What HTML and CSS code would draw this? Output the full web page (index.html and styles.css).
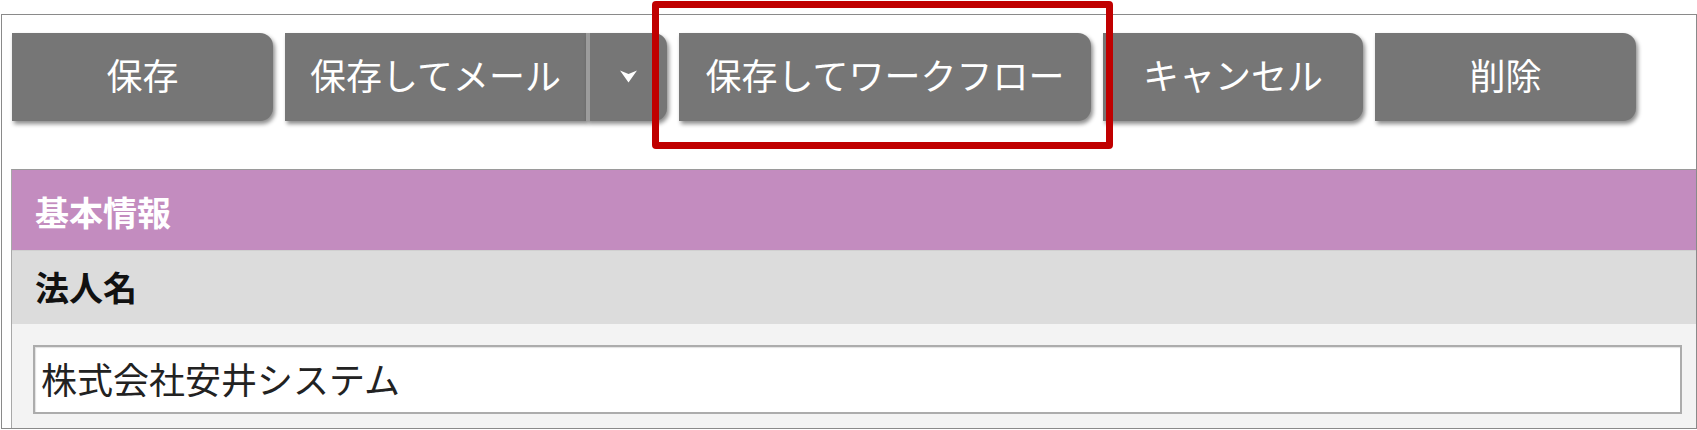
FILE: index.html
```html
<!DOCTYPE html>
<html>
    <head>
        <meta charset="utf-8">
        <title>法人情報の編集</title>
        <link rel="stylesheet" href="styles.css">
    </head>
    <body>
        <div class="frame">
            <div class="toolbar">
                <div class="btn">保存</div>
                <div class="btn_group">
                    <div class="btn btn_main">保存してメール</div>
                    <div class="btn btn_drop">
                        <svg class="drop_icon" width="17" height="14" viewBox="0 0 17 14">
                            <path d="M0 1.5 L8.5 5 L17 1.5 L8.5 13.5 Z" fill="#fff"/>
                        </svg>
                    </div>
                </div>
                <div class="btn btn_wide">保存してワークフロー</div>
                <div class="btn btn_cancel">キャンセル</div>
                <div class="btn">削除</div>
            </div>

            <div class="panel">
                <div class="panel_title">基本情報</div>
                <div class="field_label">法人名</div>
                <div class="field_body">
                    <div class="text_input">株式会社安井システム</div>
                </div>
            </div>
        </div>

        <div class="highlight"></div>
    </body>
</html>
```

FILE: styles.css
```css
* {
    box-sizing: border-box;
}

body {
    margin: 0;
    background-color: #fff;
    font-family: "Noto Sans CJK JP", "Noto Sans", sans-serif;
}

.frame {
    margin: 14px 0 0 1px;
    width: 1696px;
    height: 415px;
    border: 1px solid #8a8a8a;
    padding: 18px 0 0 9px;
    overflow: hidden;
}

.toolbar {
    display: flex;
    gap: 12px;
    padding-left: 1px;
    height: 88px;
}

.btn {
    display: flex;
    justify-content: center;
    align-items: center;
    width: 261px;
    height: 88px;
    padding-bottom: 6px;
    background-color: #767676;
    color: #fff;
    font-size: 36px;
    line-height: 40px;
    border-radius: 0 13px 13px 0;
    box-shadow: 2px 3px 4px rgba(0, 0, 0, 0.45);
}

.btn_group {
    display: flex;
}

.btn_group .btn_main {
    width: 301px;
    border-radius: 0;
}

.btn_group .btn_drop {
    width: 81px;
    border-left: 4px solid #9c9c9c;
    padding-bottom: 2px;
}

.drop_icon {
    flex: none;
    display: block;
}

.btn_wide {
    width: 412px;
}

.btn_cancel {
    width: 260px;
}

.panel {
    margin-top: 48px;
    border-top: 1px solid #9a9a9a;
    border-left: 1px solid #a8a8a8;
}

.panel_title {
    height: 80px;
    padding: 2px 0 0 23px;
    display: flex;
    align-items: center;
    background-color: #c38cbf;
    color: #fff;
    font-size: 34px;
    font-weight: bold;
}

.field_label {
    height: 74px;
    padding: 0 0 2px 23px;
    display: flex;
    align-items: center;
    background-color: #dcdcdc;
    border-top: 1px solid #d0d0d0;
    color: #111;
    font-size: 34px;
    font-weight: bold;
}

.field_body {
    height: 120px;
    padding: 21px 14px 0 21px;
    background-color: #f3f3f3;
}

.text_input {
    height: 69px;
    padding: 0 0 4px 6px;
    display: flex;
    align-items: center;
    background-color: #fff;
    border: 2px solid #acacac;
    box-shadow: inset 1px 1px 1px rgba(0, 0, 0, 0.12);
    color: #222;
    font-size: 36px;
}

/* 注目枠 */
.highlight {
    position: absolute;
    left: 652px;
    top: 1px;
    width: 461px;
    height: 148px;
    border: 7px solid #c00000;
    border-radius: 4px;
}
```
